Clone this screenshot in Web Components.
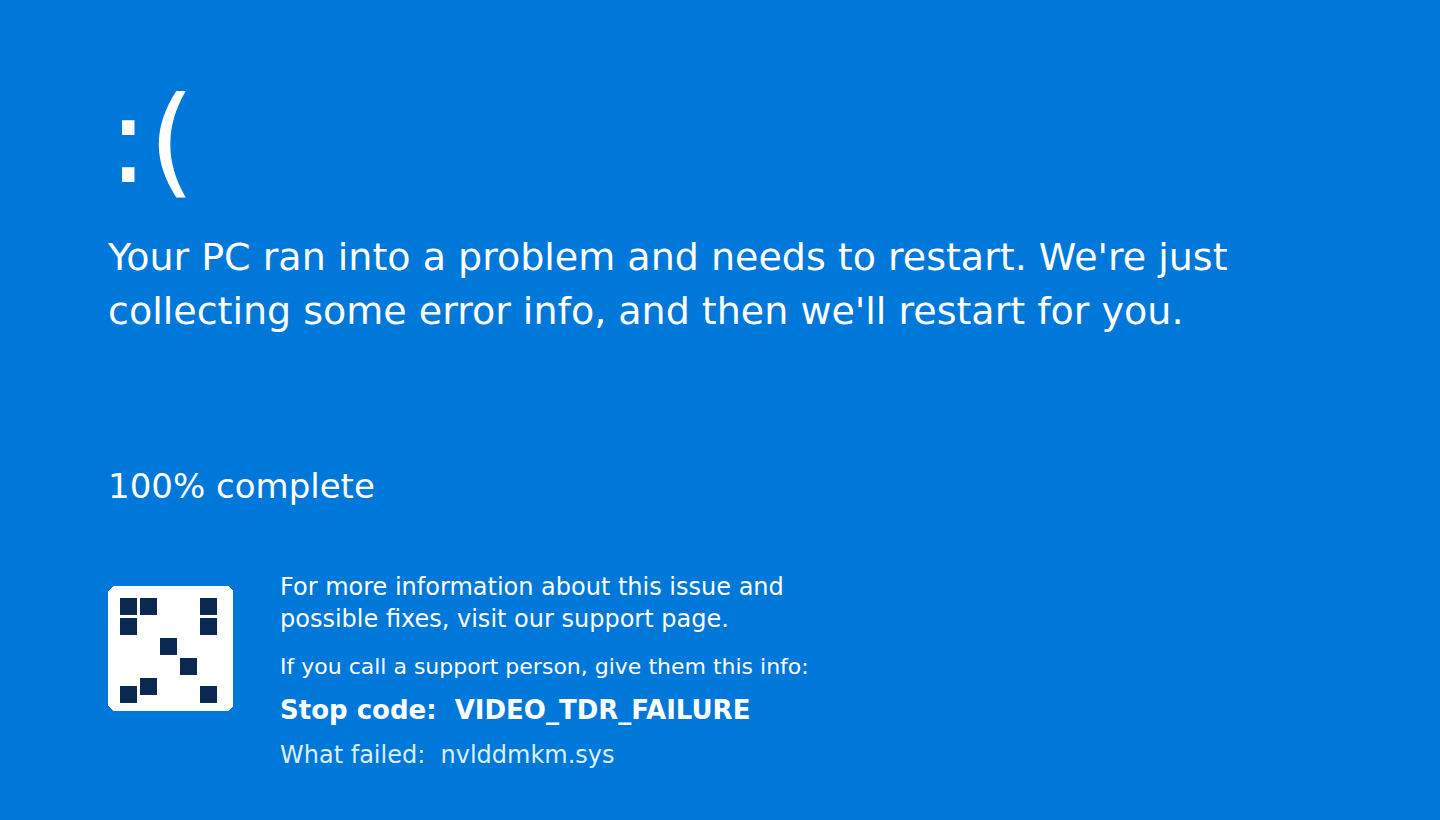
<!DOCTYPE html>
<html lang="en">
<head>
<meta charset="utf-8">
<title>Stop error</title>
<style>
html, body { margin: 0; min-height: 100%; background: #0078d9; }
body { font-family: "DejaVu Sans", sans-serif; color: #fff; }
</style>
</head>
<body>
<stop-screen></stop-screen>
<script>
class QrCode extends HTMLElement {
  constructor() {
    super();
    this.attachShadow({ mode: "open" });
    const dots = [[12,12],[32,12],[92,12],[12,32],[92,32],[52,52],[72,72],[32,92],[12,100],[92,100]];
    this.shadowRoot.innerHTML = `
      <style>
        :host { display: block; width: 125px; height: 125px; }
        svg { display: block; width: 100%; height: 100%; }
      </style>
      <svg viewBox="0 0 125 125" role="img" aria-label="QR code" shape-rendering="crispEdges">
        <path d="M5 0H120L125 5V120L120 125H5L0 120V5Z" fill="#fff"/>
        ${dots.map(([x, y]) => `<rect x="${x}" y="${y}" width="17" height="17" fill="#0a2850"/>`).join("")}
      </svg>`;
  }
}
customElements.define("qr-code", QrCode);

class StopDetails extends HTMLElement {
  constructor() {
    super();
    this.attachShadow({ mode: "open" });
    this.shadowRoot.innerHTML = `
      <style>
        :host { display: block; }
        p { margin: 0; font-size: 24px; line-height: 32px; white-space: pre-wrap; }
        .call { font-size: 22px; margin-top: 16px; }
        .code { font-size: 26px; line-height: 30px; font-weight: bold; margin-top: 12px; }
        .failed { margin-top: 14px; color: #dcf0ff; }
      </style>
      <p>For more information about this issue and<br>possible fixes, visit our support page.</p>
      <p class="call">If you call a support person, give them this info:</p>
      <p class="code">Stop code:  <slot name="code"></slot></p>
      <p class="failed">What failed:  <slot name="module"></slot></p>`;
  }
}
customElements.define("stop-details", StopDetails);

class StopScreen extends HTMLElement {
  constructor() {
    super();
    this.attachShadow({ mode: "open" });
    this.shadowRoot.innerHTML = `
      <style>
        :host { display: block; padding: 71px 108px 48px; }
        .face { font-size: 120px; line-height: 140px; }
        h1 { margin: 19px 0 0; font-size: 38px; line-height: 54px; font-weight: normal; }
        .progress { margin: 128px 0 0; font-size: 34px; line-height: 40px; }
        .info { display: flex; gap: 47px; margin-top: 65px; }
        qr-code { flex: none; margin-top: 15px; }
      </style>
      <main>
        <div class="face">:(</div>
        <h1>Your PC ran into a problem and needs to restart. We're just<br>collecting some error info, and then we'll restart for you.</h1>
        <p class="progress">100% complete</p>
        <div class="info">
          <qr-code></qr-code>
          <stop-details><span slot="code">VIDEO_TDR_FAILURE</span><span slot="module">nvlddmkm.sys</span></stop-details>
        </div>
      </main>`;
  }
}
customElements.define("stop-screen", StopScreen);
</script>
</body>
</html>
